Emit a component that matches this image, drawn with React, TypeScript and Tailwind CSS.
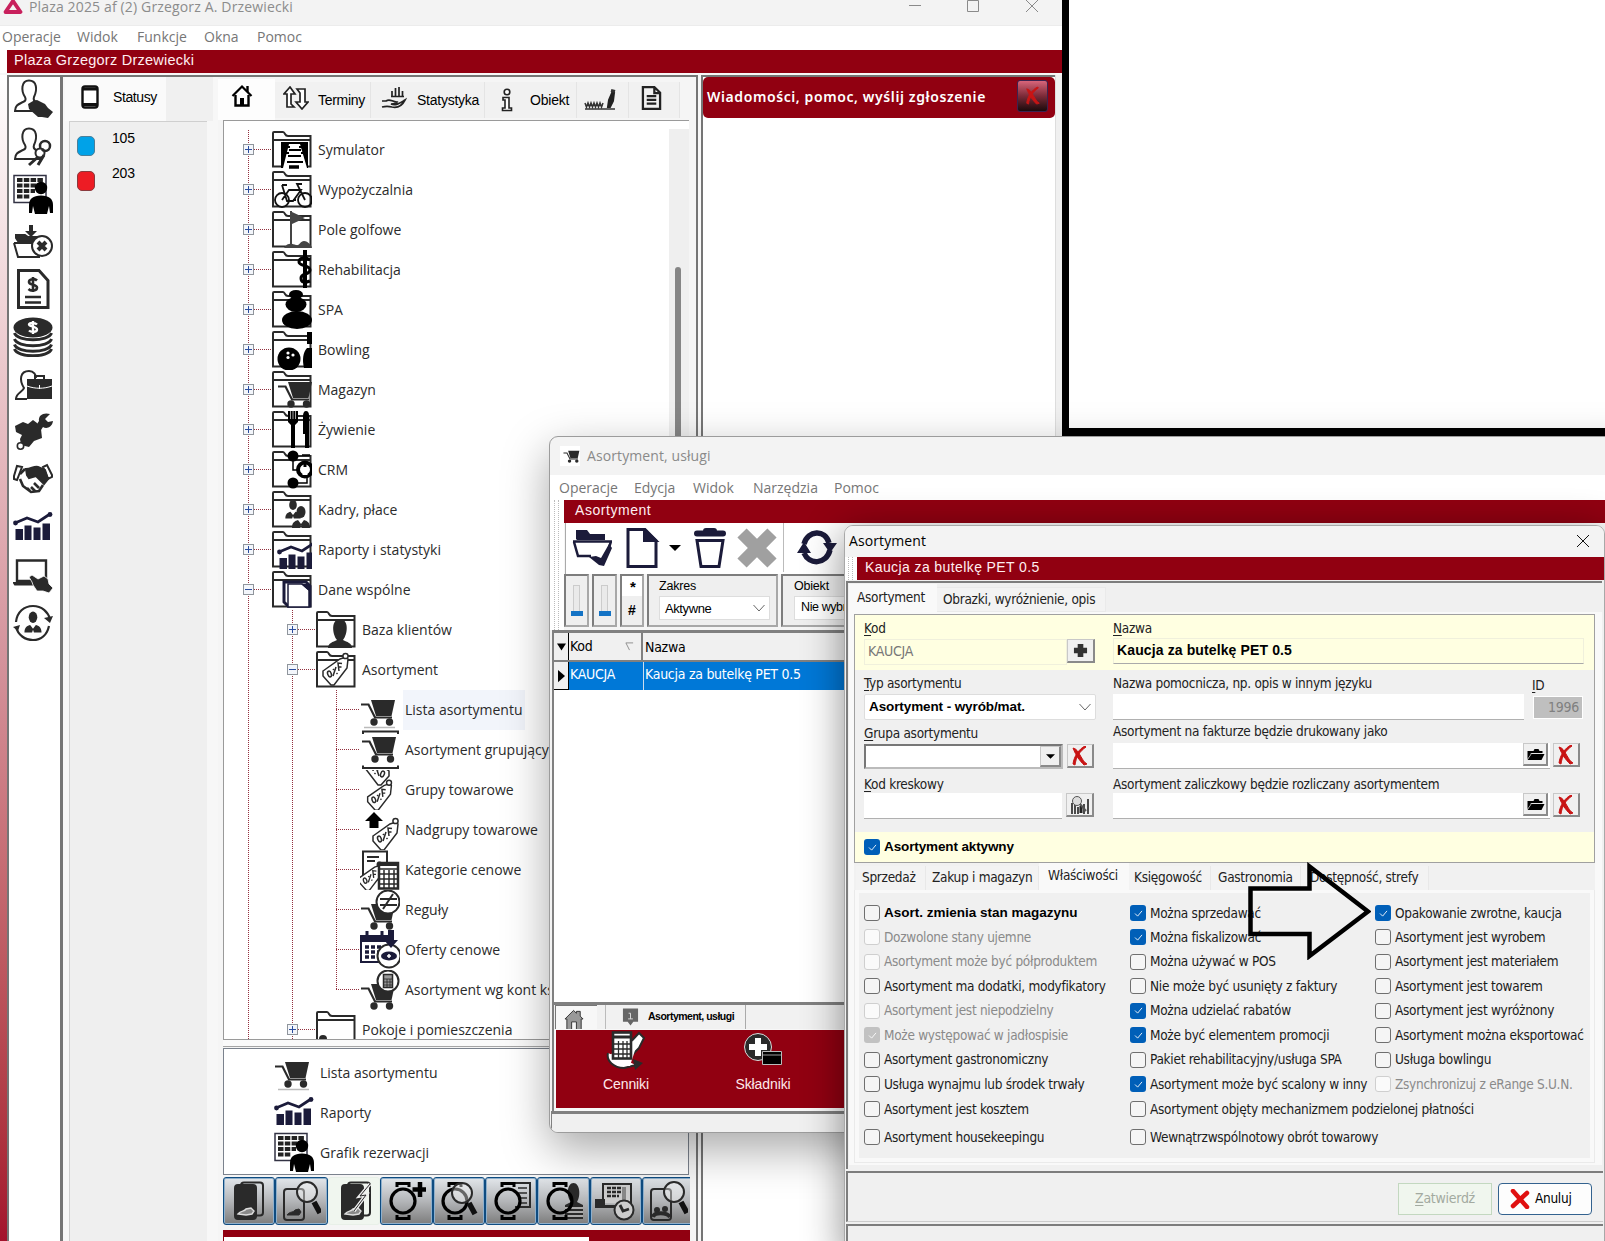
import React from "react";

const segoe = "font-['Open_Sans','Noto_Sans',sans-serif] text-[14px] whitespace-nowrap";
const tahoma = "font-['DejaVu_Sans_Condensed','DejaVu_Sans',sans-serif] text-[13.500px] tracking-[-0.280px] whitespace-nowrap";
const sans = "font-['Liberation_Sans',sans-serif] whitespace-nowrap";

const DARK = "#2a2a2a";
const NAVY = "#1b1b3a";

type P = { children?: React.ReactNode; className?: string };

function Ico({ children, className = "w-10 h-10" }: P) {
  return (
    <svg viewBox="0 0 40 40" className={"shrink-0 overflow-hidden " + className} fill="none" stroke={DARK} strokeWidth="2">
      {children}
    </svg>
  );
}

/* ---------- icon parts, all drawn on a 40x40 grid ---------- */

const Folder = () => (
  <>
    <path d="M1 36.500V3q0-1 1-1h9q1 0 2 2t3 2h22.500v30.500z" fill="#fff" />
    <path d="M1 10H38.500" />
  </>
);

const CartPart = ({ shadow }: { shadow?: boolean }) => (
  <>
    <path d="M1 14.500h7.500l6.500 13h17" strokeWidth="2.200" />
    <path d="M11 10h24l-3.500 16H16z" fill={DARK} stroke="none" />
    <circle cx="14" cy="32" r="3.700" fill={DARK} stroke="none" />
    <circle cx="29.500" cy="32" r="3.700" fill={DARK} stroke="none" />
    {shadow && <path d="M4 37.500h31" stroke="#bbb" strokeWidth="1.500" />}
  </>
);

const Bars = () => (
  <g stroke={NAVY} fill={NAVY}>
    <path d="M2 11 14 6l11 4L37 2" fill="none" strokeWidth="2.800" />
    <circle cx="2.500" cy="11" r="2.400" stroke="none" />
    <circle cx="37" cy="2.500" r="2.400" stroke="none" />
    <path d="M2.500 17H10v11H2.500zM11.500 13.500h7V28h-7zM20.500 15.500h7V28h-7zM29.500 11.500H37V28h-7.500z" stroke="none" />
  </g>
);

const Tag = () => (
  <g strokeWidth="1.500">
    <path d="M7 21 24 9l6-2 2 2-1 9-13 17h-3l-8-9z" fill="#fff" />
    <circle cx="29.500" cy="6" r="2.600" fill="#fff" />
    <ellipse cx="13.500" cy="24" rx="1.800" ry="3" transform="rotate(-20 13.500 24)" />
    <path d="m17 26 3-9M17 19l.8 1M20.500 23l1 1M23 21l-1-8 4 .5M22.500 17h3" />
  </g>
);

const Reservation = () => (
  <>
    <path d="M1 1.500h32v27H1z" fill="#fff" strokeWidth="1.500" stroke="#334" />
    <path d="M4 6h26M4 11.500h26M4 17h18M4 22.500h13" strokeWidth="3.800" stroke="#222" strokeDasharray="5.500 1.300" />
    <circle cx="28" cy="14" r="6.200" fill="#000" stroke="none" />
    <path d="M16 39V31c0-6 4-9.500 12-9.500S40 25 40 31v8h-3l-1-7-2 8H22l-2-8-1 7z" fill="#000" stroke="none" />
  </>
);

const PersonOutline = () => (
  <path d="M28 32H2c0-6 4-7 8-9 3-1 3-3 2-5-4-6-4-16.500 4-16.500 8 0 8.500 9 5 16.500-1 3 0 4 2 5l6 3" />
);

const Watch = () => (
  <>
    <circle cx="17" cy="20" r="12" stroke="#000" strokeWidth="3.200" />
    <path d="M11 6V2.500h12V6M11 34v3.500h12V34" stroke="#000" strokeWidth="3" />
  </>
);

const Lens = () => (
  <>
    <circle cx="24" cy="12" r="10" fill="#ffffff66" />
    <path d="m31 22 6 11" stroke="#111" strokeWidth="5.500" />
  </>
);

const Suit = () => (
  <g fill={DARK} stroke="none">
    <ellipse cx="20" cy="14" rx="4.500" ry="6" />
    <path d="M11 30c0-6 3-7 6-8l3 4 3-4c3 1 6 2 6 8h-8l-1-3-1 3z" />
  </g>
);

/* ---------- tree ---------- */

const roots: [string, React.ReactNode][] = [
  ["Symulator", <g key="a" stroke="none"><path d="M9 12h27v26H9z" fill="#000" /><path d="M17 14h11l7 24H11z" fill="#fff" /><path d="M15 17h3M27 17h3M13 23h4M29 23h4M17 20h12M16 26h13M15 32h16" stroke="#000" strokeWidth="2.200" /><path d="M17 37h10" stroke="#000" strokeWidth="3.500" /></g>],
  ["Wypożyczalnia", <g key="b" stroke="#111" strokeWidth="1.800"><circle cx="10" cy="30" r="7" fill="#fff" /><circle cx="33" cy="30" r="7" /><path d="m10 30 7-10h12l-8 11h-6l-5-16M33 30 25 14h5M10 15h5M21 30h3" /></g>],
  ["Pole golfowe", <g key="c" stroke="none" fill="#444"><path d="M18 1h2v36h-2zM20 2l13 6-13 6z" /><path d="M12 38c4-6 8-4 12-3s4-4 8-4 8 5 8 7z" /></g>],
  ["Rehabilitacja", <g key="d" stroke="#000" strokeWidth="3"><path d="M33 0v38" strokeWidth="4" /><path d="M38 10c-5-4-11-2-11 2s11 3 11 8-9 3-9 8 4 5 9 3" /></g>],
  ["SPA", <g key="e" stroke="none" fill="#000"><ellipse cx="24" cy="4.500" rx="7" ry="4.500" /><ellipse cx="24" cy="14.500" rx="10.500" ry="7.500" /><ellipse cx="25" cy="30" rx="15" ry="9" /></g>],
  ["Bowling", <g key="f" stroke="none" fill="#000"><circle cx="17" cy="29" r="11.500" /><circle cx="16" cy="23" r="1.600" fill="#fff" /><circle cx="21" cy="25" r="1.600" fill="#fff" /><circle cx="16" cy="27.500" r="1.600" fill="#fff" /><path d="M35 2h5v12h-5zM32 38c-2-8-1-16 3-20h5v20z" /></g>],
  ["Magazyn", <g key="g" transform="translate(5 2)"><CartPart /></g>],
  ["Żywienie", <g key="h" stroke="none" fill="#000"><path d="M16 1h10v11l-3 3v23h-4V15l-3-3z" /><path d="M18.500 1v8M21 1v8M23.500 1v8" stroke="#ccc" strokeWidth=".8" /><path d="M31 24V6c0-3 1-5 3-5s3 2 3 4v33h-4V24z" /></g>],
  ["CRM", <g key="i" stroke="#000"><circle cx="21" cy="6" r="4.500" fill="#000" /><circle cx="21" cy="33" r="4.500" fill="#000" /><path d="M21 8v12h6M25 33h10v-6M30 5h8" strokeWidth="1.500" /><circle cx="33" cy="19.500" r="7" fill="#fff" strokeWidth="4" /><path d="M33 14v4" strokeWidth="3" /><path d="M33 17v8" strokeWidth="5" stroke="#fff" /></g>],
  ["Kadry, płace", <g key="j"><g transform="translate(4 3) scale(.85)"><Suit /></g><g transform="translate(9 8)"><Suit /></g></g>],
  ["Raporty i statystyki", <g key="k" transform="translate(5 11)"><Bars /></g>],
  ["Dane wspólne", <g key="l" stroke={NAVY} strokeWidth="3"><path d="M12 12h22l4 4v20H16l-4-4z" fill="#fff" /><path d="M16 14h14l7 6v17H16z" fill="#fff" strokeWidth="1.500" /><path d="M29 14l8 7v-7z" fill={NAVY} stroke="none" /></g>],
];

const leaves: [string, React.ReactNode][] = [
  ["Lista asortymentu", <CartPart key="a" shadow />],
  ["Asortyment grupujący", <g key="b"><path d="M3 4V1.500h35V4M3 35.500V38h35v-2.500" /><g transform="translate(1 -3)"><CartPart /></g></g>],
  ["Grupy towarowe", <g key="c"><g transform="translate(36 -20) scale(-1 1)"><Tag /></g><g transform="translate(1 7) scale(.95)"><Tag /></g></g>],
  ["Nadgrupy towarowe", <g key="d"><path d="M14 2l9 9h-4.500v7h-9v-7H5z" fill="#000" stroke="none" /><g transform="translate(6 5)"><Tag /></g></g>],
  ["Kategorie cenowe", <g key="e"><path d="M3 1.500h24v28H3zM7 7h12M7 11h8" fill="#fff" /><g transform="translate(-7 9) scale(.9)"><Tag /></g><path d="M19 13h19v25.500H19z" fill="#fff" strokeWidth="2.500" /><path d="M19 14h19" strokeWidth="4" /><path d="M19 19h19M19 24h19M19 29h19M19 34h19M24 20v19M29 20v19M34 20v19" strokeWidth="1.500" /></g>],
  ["Reguły", <g key="f"><g transform="translate(0 4)"><CartPart /></g><circle cx="28" cy="12" r="11.500" fill="#fff" /><path d="M20 9h17M20 15h17M23 19 33 4" /></g>],
  ["Oferty cenowe", <g key="g" stroke={NAVY}><path d="M1 6h28v26H1z" fill="#fff" /><path d="M0 8.500h30" strokeWidth="7" /><path d="M7 1v6M22 1v6" strokeWidth="3" /><path d="M5 17h18M5 22h18M5 27h18" strokeWidth="3.500" strokeDasharray="4 2" /><circle cx="29" cy="26" r="11.500" fill="#fff" stroke={DARK} /><path d="M28 0h6v10h4l-7 8-7-8h4z" fill={NAVY} stroke="none" /><ellipse cx="29" cy="26" rx="7" ry="3.500" fill={NAVY} /><path d="M29 24v4M27 26h4" stroke="#fff" strokeWidth="1.500" /></g>],
  ["Asortyment wg kont księgowych", <g key="h"><g transform="translate(0 4)"><CartPart /></g><circle cx="28" cy="11" r="10.500" fill="#fff" /><path d="M23.500 4.500h9v13h-9z" fill="#999" strokeWidth="1.500" /><path d="M24 9h8M24 12h8M24 15h8M27 9v9M30 9v9" strokeWidth=".8" /></g>],
];

const dotsV = "w-px shrink-0 bg-[repeating-linear-gradient(to_bottom,#93303f_0px,#93303f_1px,transparent_1px,transparent_2px)]";
const dotsH = "h-px bg-[repeating-linear-gradient(to_right,#93303f_0px,#93303f_1px,transparent_1px,transparent_2px)]";

function Box({ open }: { open?: boolean }) {
  return (
    <span className="absolute left-[-5px] top-[14px] w-[11px] h-[11px] border border-[#8f959c] bg-[#f3f6fb]">
      <span className="absolute left-px right-px top-1 h-px bg-[#2a4d9e]" />
      {!open && <span className="absolute top-px bottom-px left-1 w-px bg-[#2a4d9e]" />}
    </span>
  );
}

function Node({ level, icon, label, box, open, last, active }: {
  level: number; icon: React.ReactNode; label: string; box?: boolean; open?: boolean; last?: boolean; active?: boolean;
}) {
  return (
    <div className="flex h-10 shrink-0 items-center">
      <div className="w-6 shrink-0" />
      {level > 0 && <div className="w-11 h-10 shrink-0 flex"><div className={dotsV} /></div>}
      {level > 1 && <div className={"w-11 h-10 shrink-0 flex"}>{<div className={last ? "w-px" : "w-px"} />}</div>}
      <div className="relative h-10 w-6 shrink-0">
        <div className={dotsV + (last ? " h-5" : " h-10")} />
        <div className={"absolute left-0 top-[19px] w-6 " + dotsH} />
        {box && <Box open={open} />}
      </div>
      <Ico>
        {level < 2 && <Folder />}
        {icon}
      </Ico>
      <div className={segoe + " text-[#2b2b2b] h-10 leading-[40px] " + (level === 2 ? "ml-[3px] px-[2px] " : "ml-[6px] ") + (active ? "bg-[#f2f5fb]" : "")}>{label}</div>
    </div>
  );
}

/* ---------- main window ---------- */

const side: React.ReactNode[] = [
  <g key="1"><PersonOutline /><path d="m15 25 5-3 4-1 8 4 3 4 5 4-5 6-6-1h-4l-9-8z" fill={DARK} stroke="none" /></g>,
  <g key="2"><PersonOutline /><circle cx="32" cy="19" r="5" strokeWidth="2.500" /><circle cx="27" cy="26" r="4.500" fill="#fff" /><path d="m25 30-9 8M29 24l2-2M31 28l-6 10" strokeWidth="3" /></g>,
  <g key="3"><Reservation /></g>,
  <g key="4"><path d="M16 3h4v6h4l-6 6-6-6h4z" fill={DARK} stroke="none" /><path d="M3 16V13h9l3 2h9v4H5z" fill={DARK} /><path d="M1 21l4 14h22M1 21h19" /><circle cx="29" cy="24" r="10" fill="#fff" /><path d="m25 20 8 8M33 20l-8 8" strokeWidth="4" /></g>,
  <g key="5"><path d="M5.500 1.500H26l9 10v27H5.500z" strokeWidth="3" /><path d="M12 28h16M12 33.500h16" strokeWidth="2.400" /><path d="M24 11.500c-2-2-8-2-8 1.500s8 2 8 5.500-6 4-8.500 1.500M20 8v15" strokeWidth="2.600" /></g>,
  <g key="6"><ellipse cx="20" cy="10.500" rx="19.500" ry="10" fill={DARK} stroke="none" /><path d="M24 7.500c-2-2-8-2-8 0s8 2 8 5-6 3-8 1M20 4v13" stroke="#fff" strokeWidth="2.400" /><path d="M1.500 16c3 9 34 9 37 0M1.500 22c3 9 34 9 37 0M1.500 27.500c3 9 34 9 37 0M1.500 32c3 9 34 9 37 0" strokeWidth="3" /></g>,
  <g key="7"><path d="M3 34c0-6 7-7 8-11-5-8-4-17 5-17 5 0 7 4 7 7M2 34h12" /><path d="M14 14h25v20H14z" fill={DARK} stroke="none" /><path d="M22 14v-3h9v3" /><path d="M14 21c8 3 17 3 25 0M26.500 20v4" stroke="#fff" strokeWidth="1" /></g>,
  <g key="8" fill={DARK} stroke="none"><path d="M2 14l8-4 5 2 5-4 4 3 4 6 1 9-8 3-5 6-8-2-1-6 2-4-6-3z" /><path d="m22 15 4-6c-1-6 5-9 11-7l-5 5 3 3 5-1c-1 7-7 8-10 6l-4 6z" /><circle cx="7.500" cy="34" r="3.200" fill="#fff" stroke={DARK} strokeWidth="1.600" /></g>,
  <g key="9"><path d="m1 16 3-10 5 1-5 13-3-1zM39 15 34 5l-4 2 5 12 4-2z" fill="#fff" /><path d="M13 9c5 0 8-3 12-2l7 3 3 9-4 5-8-8-7 2-2-3z" fill={DARK} /><path d="M7 19l3 7 8 6 8-1 4-6M17 31l-3-3M22 31l-4-4M26 28l-5-5M7 14l5-5" strokeWidth="2.600" /></g>,
  <g key="10" transform="translate(0 5)"><Bars /></g>,
  <g key="11"><path d="M4 5.500h29V26H4z" strokeWidth="2.400" /><path d="M1 28h22v1.500H2z" fill={DARK} /><path d="m16 22 3-2 6 4 6-3 4 3 1 5 4 4-4 5-6-2-6 0-4-6-1-3z" fill={DARK} stroke="#fff" strokeWidth=".8" /></g>,
  <g key="12"><path d="M3 19C4 9 11 3 20 3s15 6 17 13M36 23c-2 9-8 14-16 14S5 32 3 24" strokeWidth="2.200" /><path d="m31 15 9-2-3 7zM0 24l7-2-2 6z" fill={DARK} stroke="none" /><g transform="translate(1 1) scale(.95)"><Suit /></g></g>,
];

const Docs = () => (
  <>
    <rect x="12" y="1.500" width="22" height="33" rx="3" />
    <rect x="6" y="4" width="21" height="34" rx="3" fill={DARK} />
    <path d="M9 33c3-4 6-2 8-5l5-1 3 3-2 3-6 1z" stroke="#ddd" strokeWidth="1.400" fill="#888" />
  </>
);

const dock: React.ReactNode[] = [
  <Docs key="1" />,
  <g key="2"><rect x="3" y="8" width="20" height="31" rx="3" /><path d="M6 34c3-4 6-2 8-5l4-1 2 3-2 3z" fill={DARK} strokeWidth="1" /><g transform="translate(2 -1)"><Lens /></g></g>,
  <g key="3"><Docs /><path d="m34 3-10 12 6-1-12 16" stroke="#eee" strokeWidth="3.500" /><path d="m34 3-10 12 6-1-12 16" strokeWidth="1" /></g>,
  <g key="4"><Watch /><path d="M34 1v15M26.500 8.500h15" stroke="#000" strokeWidth="4.500" /></g>,
  <g key="5"><Watch /><Lens /></g>,
  <g key="6"><path d="M18 2h21v24H24" /><path d="M27 7h9M27 12h9M29 17h7M30 22h6" strokeWidth="1.500" /><Watch /></g>,
  <g key="7"><path d="M22 38V24l6-3c-5-6-4-19 2.500-19S38 15 34 21l6 3v14z" fill={DARK} stroke="none" /><path d="M22 27h18M22 31h18M22 35h18" stroke="#aaa" /><Watch /></g>,
  <g key="8"><path d="M8 22V3h28v20" fill="#ccc" /><path d="M0 18h10v6h12v3H0z" fill={DARK} stroke="none" /><path d="M12 7h14M12 11h14M12 15h12" strokeDasharray="4 1" strokeWidth="2.500" /><path d="M29 6v14" stroke="#888" strokeWidth="4" /><circle cx="29" cy="29" r="9.500" fill="#ccc" /><path d="m25 24 3 6 6-2" strokeWidth="2.800" /></g>,
  <g key="9"><rect x="3" y="8" width="20" height="31" rx="3" /><circle cx="9" cy="29" r="3" fill={DARK} stroke="none" /><circle cx="17" cy="28" r="3" fill={DARK} stroke="none" /><path d="M5 36c1-5 14-5 17 0" strokeWidth="4" /><g transform="translate(2 -1)"><Lens /></g></g>,
];

const RedCross = ({ className = "w-5 h-5" }: { className?: string }) => (
  <svg viewBox="0 0 20 20" className={className}>
    <path d="M3 2c4 1 5 4 7 7 3 5 4 7 7 9l-3 1C10 15 6 10 3 2zM16 1C10 5 6 11 5 19l-2-1C4 10 9 3 15 0z" fill="#c81414" stroke="#c81414" />
  </svg>
);

function MenuBar({ items, className }: { items: [string, string][]; className: string }) {
  return (
    <div className={segoe + " flex items-center bg-white text-[#767676] " + className}>
      {items.map(([t, w]) => <span key={t} className={"shrink-0 " + w}>{t}</span>)}
    </div>
  );
}

function MainWindow() {
  return (
    <div className="absolute left-0 top-0 w-[1062px] h-[1241px] bg-[#f7f7f7] flex flex-col overflow-hidden">
      <div className="h-[26px] bg-[#f3f3f3] flex items-start shrink-0 border-b border-[#ececec]">
        <svg viewBox="0 0 20 16" className="w-5 h-4 ml-[3px] -mt-[1px]"><path d="M10 2 17.500 13H2.500z" fill="none" stroke="#c8205c" strokeWidth="3.800" strokeLinejoin="round" /></svg>
        <div className={segoe + " ml-[6px] h-4 leading-[13px] text-[#8c8c8c] w-[880px] tracking-[0.150px]"}>Plaza 2025 af (2) Grzegorz A. Drzewiecki</div>
        <svg viewBox="0 0 132 14" className="w-[132px] h-[14px]" fill="none" stroke="#8a8a8a"><path d="M0 5.500h12M58.500 .5h11v11h-11zM117 0l12 12M129 0l-12 12" /></svg>
      </div>
      <MenuBar className="h-6 shrink-0 pl-[2px] pb-[3px]" items={[["Operacje", "w-[75px]"], ["Widok", "w-[60px]"], ["Funkcje", "w-[67px]"], ["Okna", "w-[53px]"], ["Pomoc", ""]]} />
      <div className="h-[23px] shrink-0 pl-[7px] bg-white">
        <div className={sans + " h-[23px] bg-[#910011] text-[#ffeef0] text-[14.500px] leading-[21px] pl-[7px] tracking-[0.250px]"}>Plaza Grzegorz Drzewiecki</div>
      </div>
      <div className="flex flex-1 min-h-0 pt-[2px]">
        <div className="w-[7px] shrink-0 bg-gradient-to-b from-white via-[#d4939c] to-[#a3122c]" />
        <div className="w-[53px] shrink-0 border-l-2 border-t-2 border-[#757575] bg-white pl-1">
          <div className="w-10">
            {side.map((s, i) => (
              <div key={i} className="h-[47.600px] pt-[2px]"><Ico className="w-10 h-10">{s}</Ico></div>
            ))}
          </div>
        </div>
        <div className="w-[158px] shrink-0 border-l-[3px] border-t-2 border-[#757575] bg-[#f7f7f7] flex flex-col">
          <div className="h-11 flex ml-[2px] w-[148px] bg-[#f0f0f0] shrink-0">
            <div className="w-[101px] bg-[#fafafa] flex items-center pb-1">
              <svg viewBox="0 0 18 24" className="w-[18px] h-6 ml-4"><rect x="1.500" y="1.500" width="15" height="21" rx="2.500" fill="#fff" stroke="#111" strokeWidth="2.400" /><path d="M2 4h14M2 19.500h14" stroke="#111" strokeWidth="3" /></svg>
              <span className={sans + " text-[14px] ml-[14px] tracking-[-0.400px]"}>Statusy</span>
            </div>
          </div>
          <div className="flex-1 bg-[#efefef] border-l border-t border-[#cfcfcf] w-[138px] ml-[6px]">
            <div className="flex pt-[14px] pl-[7px] h-[49px]">
              <div className="w-[18px] h-5 rounded-[5px] bg-[#00a2e8] border border-[#4b7f99]" />
              <span className={sans + " text-[14px] leading-4 -mt-[6px] ml-[17px] tracking-[-0.2px]"}>105</span>
            </div>
            <div className="flex pl-[7px]">
              <div className="w-[18px] h-5 rounded-[5px] bg-[#ed1c24] border border-[#8a3a3e]" />
              <span className={sans + " text-[14px] leading-4 -mt-[6px] ml-[17px] tracking-[-0.2px]"}>203</span>
            </div>
          </div>
        </div>
        <div className="w-[480px] shrink-0 border-t-2 border-[#757575] flex flex-col pr-[1px] border-r-2 bg-[#f5f5f5]">
          <div className="flex h-[43px] shrink-0 items-start pt-[2px]">
            <div className="w-[57px] h-[41px] bg-[#fdfdfd]">
              <svg viewBox="0 0 24 24" className="w-[24px] h-6 ml-[13px] mt-[5px]"><path d="m1.500 12 9.500-9.500L20.500 12" fill="none" stroke="#000" strokeWidth="2.200" /><path d="M4.500 11v10.500h13V11M16.500 8V2" fill="none" stroke="#000" strokeWidth="2.400" /><path d="M9 14h4v8H9z" /></svg>
            </div>
            <div className="h-9 mt-[3px] w-24 flex items-center border-r border-[#e4e4e4] bg-[#f1f1f1]">
              <svg viewBox="0 0 26 24" className="w-[26px] h-6 ml-[8px] -mt-1" fill="#fff" stroke="#222" strokeWidth="1.700"><path d="M7 1 1 8h3v13h7l-3-3V8h4z" /><path d="M19 23l6-7h-3V3h-8l3 4v9h-4z" /></svg>
              <span className={sans + " text-[14px] ml-[9px] tracking-[-0.300px]"}>Terminy</span>
            </div>
            <div className="h-9 mt-[3px] w-[114px] flex items-center border-r border-[#e4e4e4] bg-[#f1f1f1]">
              <svg viewBox="0 0 26 24" className="w-[26px] h-6 ml-[10px] -mt-1" fill="none" stroke="#222" strokeWidth="1.700"><path d="M11 10V5M14.500 10V2M18 10V1M21.500 10V5M10 10.500h13" /><path d="M1 15h4c4-3 6 1 11 1-1 2-3 2-6 2 5 2 9-1 14-4-3 6-8 8-13 7-4-1-6-1-10 0" /></svg>
              <span className={sans + " text-[14px] ml-[10px] tracking-[-0.250px]"}>Statystyka</span>
            </div>
            <div className="h-9 mt-[3px] w-[92px] flex items-center border-r border-[#e4e4e4] bg-[#f1f1f1]">
              <svg viewBox="0 0 12 24" className="w-3 h-6 ml-[16px]" fill="#fff" stroke="#222" strokeWidth="1.600"><circle cx="6" cy="4" r="2.800" /><path d="M2 9.500h6V20h2.500v2.500h-9V20H4v-8H2z" /></svg>
              <span className={sans + " text-[14px] ml-[17px] tracking-[-0.200px]"}>Obiekt</span>
            </div>
            <div className="h-9 mt-[3px] w-[52px] flex items-center border-r border-[#e4e4e4] bg-[#f1f1f1]">
              <svg viewBox="0 0 32 24" className="w-8 h-6 ml-[7px]" fill="none" stroke="#333"><path d="M1 15l1.500 4 1.500-4 1.500 4 1.500-4 1.500 4 1.500-4 1.500 4 1.500-4 1.500 4 1.500-4 1.500 4 1.500-4" strokeWidth="1.500" /><path d="M1 21h30" strokeWidth="1.500" /><path d="m24 19 1-7 3-7h2l-1 8-3 6z" fill="#222" stroke="#222" strokeWidth="2" /><path d="M27 2.500l4 1" strokeWidth="3" /></svg>
            </div>
            <div className="h-9 mt-[3px] w-[51px] flex items-center border-r border-[#e4e4e4] bg-[#f1f1f1]">
              <svg viewBox="0 0 22 26" className="w-[21px] h-[26px] ml-3 -mt-1" fill="none" stroke="#222" strokeWidth="2.400"><path d="M2 1.500h12l6 6v17H2zM14 2v6h6M6 11h10M6 15h10M6 19h10" /></svg>
            </div>
          </div>
          <div className="ml-[5px] w-[466px] h-[920px] shrink-0 border-t border-b border-l border-[#9a9a9a] bg-white flex overflow-hidden">
            <div className="flex-1 pt-[9px] overflow-hidden flex flex-col relative">
              {roots.map(([label, icon]) => (
                <Node key={label} level={0} label={label} icon={icon} box open={label === "Dane wspólne"} />
              ))}
              <Node level={1} label="Baza klientów" box icon={<path d="M12 38c0-5 5-6 9-8-5-6-6-21 3-21s8 15 3 21c4 2 9 3 9 8z" fill={DARK} stroke="none" />} />
              <Node level={1} label="Asortyment" box open icon={<Tag />} />
              <div className="flex flex-col shrink-0 relative">
                {leaves.map(([label, icon], i) => (
                  <Node key={label} level={2} label={label} icon={icon} last={i === leaves.length - 1} active={i === 0} />
                ))}
                {/* the parent branch carries on beside the leaves */}
                <div className={"absolute left-[68px] top-0 bottom-0 " + dotsV} />
              </div>
              <Node level={1} label="Pokoje i pomieszczenia" box icon={<circle cx="7" cy="29" r="4" fill={DARK} stroke="none" />} />
            </div>
            <div className="w-5 bg-[#efefef] mt-2">
              <div className="mt-[138px] ml-[6px] w-[6px] h-[600px] rounded bg-[#858585]" />
            </div>
          </div>
          <div className="ml-[5px] w-[466px] h-[7px] shrink-0 border-b border-[#a5a5a5] bg-[#fafafa]" />
          <div className="ml-[5px] mt-[1px] w-[466px] h-[127px] shrink-0 border border-[#7b828d] bg-white flex flex-col pt-[3px]">
            {([["Lista asortymentu", <CartPart key="1" shadow />], ["Raporty", <g key="2" transform="translate(0 5)"><Bars /></g>], ["Grafik rezerwacji", <Reservation key="3" />]] as [string, React.ReactNode][]).map(([t, ic]) => (
              <div key={t} className="h-10 flex items-center pl-[50px]">
                <Ico>{ic}</Ico>
                <span className={segoe + " ml-[6px] text-[#2b2b2b]"}>{t}</span>
              </div>
            ))}
          </div>
          <div className="ml-[5px] mt-[2px] w-[467px] flex shrink-0 overflow-hidden">
            {dock.map((d, i) => (
              <div key={i} className={"w-[52.400px] h-12 shrink-0 flex items-center justify-center border rounded-[3px] " + (i === 2 ? "bg-[#f0f6ef] border-[#e8f0e8]" : "bg-gradient-to-b from-[#e2e6ea] via-[#b4b6b9] to-[#7d7d7d] border-[#0f4c81] shadow-[inset_0_0_0_1px_#8fb0cc]")}>
                <Ico className={i === 2 ? "w-10 h-10 ml-1" : "w-10 h-10 -ml-[1px]"}>{d}</Ico>
              </div>
            ))}
          </div>
          <div className="ml-[5px] mt-[5px] w-[467px] flex-1 bg-[#910011] pt-[7px] pl-[1px]">
            <div className="w-[365px] h-[10px] bg-white" />
          </div>
        </div>
        <div className="w-[354px] ml-[3px] shrink-0 border-l-2 border-t-2 border-[#757575] bg-white">
          <div className="h-[41px] flex items-center bg-[#910011] rounded-[5px] pl-[4px] pb-[3px] text-white">
            <span className={"font-['Noto_Sans',sans-serif] font-semibold text-[14px] whitespace-nowrap w-[310px] tracking-[0.600px]"}>Wiadomości, pomoc, wyślij zgłoszenie</span>
            <div className="w-[31px] h-8 rounded-[3px] border border-[#3b2350] bg-gradient-to-b from-[#d8657a] via-[#7c2a38] to-[#1c0a0c] flex items-center justify-center">
              <RedCross className="w-[18px] h-6" />
            </div>
          </div>
        </div>
        <div className="flex-1 bg-[#f0f0f0] border-l border-[#ddd]" />
      </div>
    </div>
  );
}

/* ---------- "Asortyment, usługi" ---------- */

const Grip = () => <div className="w-[5px] border-x border-dotted border-[#bbb]" />;

const sunk = "border-2 border-[#7d7d7d] border-r-[#a8a8a8] border-b-[#a8a8a8] bg-[#efefef]";

function ListWindow() {
  return (
    <div className="absolute left-[549px] top-[436px] w-[1100px] h-[697px] rounded-[9px] border border-[#9c9c9c] bg-[#f3f3f3] shadow-[0_16px_46px_rgba(0,0,0,0.35)] flex flex-col overflow-hidden">
      <div className="h-[38px] shrink-0 flex items-center pl-[10px] pb-[1px]">
        <div className="w-5 h-5 bg-white flex items-center justify-end"><Ico className="w-[17px] h-[17px]"><g transform="translate(0 -2) scale(1.100)"><CartPart /></g></Ico></div>
        <span className={segoe + " ml-[7px] text-[#8a8a8a] tracking-[0.100px]"}>Asortyment, usługi</span>
      </div>
      <MenuBar className="h-[25px] shrink-0 pl-[9px] pb-[1px]" items={[["Operacje", "w-[75px]"], ["Edycja", "w-[59px]"], ["Widok", "w-[60px]"], ["Narzędzia", "w-[81px]"], ["Pomoc", ""]]} />
      <div className="flex h-[130px] shrink-0 bg-[#f5f5f5]">
        <div className="w-[14px] bg-white pl-1 flex"><Grip /></div>
        <div className="flex-1 flex flex-col">
          <div className={sans + " h-[23px] bg-[#910011] text-[#ffeef0] text-[14px] leading-[21px] pl-[11px] tracking-[0.550px]"}>Asortyment</div>
          <div className="h-[51px] bg-white flex items-center border-l border-[#aaa] ml-[1px] pl-[6px] pb-[2px]">
            <Ico className="w-10 h-10"><path d="M4 11V2h11l3 4h15v6H5z" fill={NAVY} stroke="none" /><path d="m2 14 4 14h13M1 13.500h38l-3 9" stroke={NAVY} strokeWidth="2.500" /><path d="m17 29 7-1 5 2 8-14 3 4-8 18-5-1z" fill={NAVY} stroke="none" /></Ico>
            <Ico className="w-10 h-10 ml-[10px]"><path d="M6 1.500h17l11 11v26H6z" stroke={NAVY} strokeWidth="3" /><path d="M22 1l13 12H22z" fill={NAVY} stroke={NAVY} /></Ico>
            <svg viewBox="0 0 12 6" className="w-3 h-[6px] ml-[7px]"><path d="M0 0h12L6 6z" /></svg>
            <Ico className="w-10 h-10 ml-[9px]"><path d="M7 5.500h26M16 3h8" stroke={NAVY} strokeWidth="6" strokeLinecap="round" /><path d="M7 12.500h26l-4 26H11z" stroke={NAVY} strokeWidth="3" /></Ico>
            <Ico className="w-[42px] h-10 ml-[6px]"><path d="m5 5 30 30M35 5 5 35" stroke="#a0a0a0" strokeWidth="13" /></Ico>
            <div className="w-px h-[49px] bg-[#bbb] ml-[5px]" />
            <Ico className="w-10 h-10 ml-[13px]"><path d="M7 16C11 2 28 1 32 15M33 22c-4 15-21 15-26 3" stroke={NAVY} strokeWidth="5.500" /><path d="M26 15h14l-7 10zM0 25 7 14l7 11z" fill={NAVY} stroke="none" /></Ico>
          </div>
          <div className="h-[53px] flex gap-[3px]">
            {[0, 1].map((i) => (
              <div key={i} className={sunk + " w-[25px] flex flex-col items-center pt-[9px]"}>
                <div className="w-[7px] h-[28px] border border-[#ccc] bg-[#eaeaea]" />
                <div className="w-3 h-[5px] -mt-[2px] bg-[#1473c5]" />
              </div>
            ))}
            <div className={sunk + " w-[24px] flex flex-col font-bold text-[15px] items-center " + sans}>
              <div className="h-[20px] w-5 pl-[8px] leading-[22px] bg-white">*</div>
              <div className="text-[14px] leading-[29px]">#</div>
            </div>
            <div className={sunk + " w-[131px] pl-[10px] " + sans}>
              <div className="text-[12.500px] leading-[20px] -tracking-[0.200px]">Zakres</div>
              <div className="w-[111px] h-6 bg-white border border-[#ddd] text-[13px] leading-[23px] pl-[5px] flex justify-between items-center pr-1 -tracking-[0.400px]">
                Aktywne
                <svg viewBox="0 0 12 8" className="w-3 h-2" fill="none" stroke="#666"><path d="m.5 1 5.500 6L11.500 1" /></svg>
              </div>
            </div>
            <div className={sunk + " w-[300px] pl-[11px] " + sans}>
              <div className="text-[12.500px] leading-[20px] -tracking-[0.200px]">Obiekt</div>
              <div className="w-[180px] h-6 bg-white border border-[#ddd] text-[12.500px] leading-[20px] pl-[6px] -tracking-[0.400px]">Nie wybrano</div>
            </div>
          </div>
        </div>
      </div>
      <div className="ml-[2px] h-[372px] shrink-0 bg-white border-l-2 border-t-[3px] border-[#808080] flex flex-col">
        <div className={tahoma + " h-[29px] shrink-0 flex border-b-2 border-[#808080] bg-[#f0f0f0] text-[14px]"}>
          <div className="w-[15px] border-r border-black flex items-center justify-center"><svg viewBox="0 0 10 8" className="w-[9px] h-2"><path d="M0 0h10L5 8z" /></svg></div>
          <div className="w-[74px] border-r-2 border-[#808080] flex items-center justify-between pl-px pr-[7px]">Kod<svg viewBox="0 0 10 10" className="w-[9px] h-[9px]" fill="none" stroke="#888"><path d="M9 1H1l4 8" /></svg></div>
          <div className="pl-[2px] leading-[28px]">Nazwa</div>
        </div>
        <div className={tahoma + " h-7 flex text-white text-[14px]"}>
          <div className="w-[15px] bg-[#f0f0f0] border-r border-b border-black flex items-center justify-center"><svg viewBox="0 0 8 14" className="w-[7px] h-[14px]"><path d="M0 0v14l8-7z" /></svg></div>
          <div className="w-[75px] bg-[#0078d7] pl-px leading-[24px] border-r border-[#cde]">KAUCJA</div>
          <div className="flex-1 bg-[#0078d7] pl-px leading-[24px]">Kaucja za butelkę PET 0.5</div>
        </div>
      </div>
      <div className="ml-[2px] h-[27px] shrink-0 border-l-2 border-t-[3px] border-[#808080] bg-[#f1f1f1] flex pl-[1px]">
        <div className="w-[42px] border-l border-t border-[#777] flex pl-[8px] pt-[2px] bg-[#f7f7f7]">
          <svg viewBox="0 0 22 22" className="w-[21px] h-[22px]" fill="#999" stroke="#333"><path d="M1 11 10 2l3 3V3h4v5l3 3h-2v11h-5v-8H8v8H3V11z" /></svg>
        </div>
        <div className="w-px ml-[8px] bg-[#bbb]" />
        <div className="w-[140px] border-r border-[#aaa] flex items-center pl-4">
          <svg viewBox="0 0 18 20" className="w-[17px] h-5"><path d="M1 1h16v14h-5l-3 4-3-4H1z" fill="#666" /><path d="M7 6h2v6M6.500 12h5" stroke="#ddd" fill="none" /></svg>
          <span className={sans + " ml-[9px] text-[10.500px] font-bold tracking-[-0.500px]"}>Asortyment, usługi</span>
        </div>
      </div>
      <div className="ml-[2px] h-[82px] shrink-0 border-l-2 border-[#808080] pl-[2px] pb-[3px] pt-[1px] bg-[#f7f7f7]">
        <div className={sans + " h-[78px] bg-[#910011] text-[#ffe9ec] text-[14px] flex"}>
          <div className="w-[140px] flex flex-col items-center pt-[1px] tracking-[-0.100px]">
            <Ico className="w-10 h-10"><path d="M2 22c-2 8 6 15 16 15l12-3M20 16 33 2l5 5-5 10-8 8" fill="#fff" stroke={DARK} /><path d="M4 24 12 35h12l6-19-5-8z" fill="#fff" stroke="none" /><rect x="7" y="1.500" width="18" height="26" fill="#fff" strokeWidth="2.600" /><path d="M8 6h16" strokeWidth="3" /><path d="M8 13h16M8 18h16M8 23h16M12.500 10v17M17 10v17M21 10v17" strokeWidth="1.300" /><path d="m27 28 10 4-8 7z" fill={DARK} stroke="none" /></Ico>
            <span className="mt-[3px]">Cenniki</span>
          </div>
          <div className="w-[134px] flex flex-col items-center pt-[1px] tracking-[-0.100px]">
            <Ico className="w-10 h-10"><circle cx="15" cy="16" r="13.500" fill={DARK} stroke="#ddd" strokeWidth="1" /><path d="M15 7v18M6 16h18" stroke="#fff" strokeWidth="6" /><path d="M19.500 20.500h19v13h-19z" fill="#000" stroke="#bbb" strokeWidth="1" /><path d="M20 24h18" stroke="#999" strokeWidth="1" /></Ico>
            <span className="mt-[3px]">Składniki</span>
          </div>
        </div>
      </div>
      <div className="ml-[1px] flex-1 border-t-[3px] border-l border-[#808080] bg-[#f0f0f0]" />
    </div>
  );
}

/* ---------- item dialog ---------- */

function Label({ text, u, className = "" }: { text: string; u?: boolean; className?: string }) {
  return (
    <div className={tahoma + " h-4 leading-4 text-[#222] " + className}>
      {u ? <><span className="underline underline-offset-2">{text[0]}</span>{text.slice(1)}</> : text}
    </div>
  );
}

const btn = "bg-[#f0f0f0] border-t border-l border-[#c8c8c8] border-b-2 border-r-2 border-b-[#8a8a8a] border-r-[#8a8a8a] flex items-center justify-center";
const input = "bg-white border-b border-[#b0b0b0] shrink-0";

const OpenFolder = () => (
  <svg viewBox="0 0 18 14" className="w-[19px] h-[14px]"><path d="M1 12V4h6l1-2h4l1 2h3v2H5z" /><path d="M1 13 5 7h13l-3 6z" /><path d="M4 6.500h12" stroke="#ddd" strokeWidth=".6" /></svg>
);

function Lookup() {
  return (
    <div className="flex">
      <div className={input + " w-[437px] h-[26px] flex justify-end pr-[2px]"}>
        <div className={btn + " w-[25px] h-[23px]"}><OpenFolder /></div>
      </div>
      <div className={btn + " w-[27px] h-6 ml-[3px]"}><RedCross /></div>
    </div>
  );
}

type State = "off" | "on" | "dis" | "dison";

function Check({ state }: { state: State }) {
  const look = {
    off: "border border-[#6f6f6f] bg-[#f5f5f5]",
    on: "bg-[#005fb8]",
    dis: "border border-[#cfcfcf] bg-[#fafafa]",
    dison: "bg-[#c2c2c2]",
  }[state];
  return (
    <span className={"w-4 h-4 rounded-[3px] shrink-0 flex items-center justify-center " + look}>
      {(state === "on" || state === "dison") && (
        <svg viewBox="0 0 10 8" className="w-[9px] h-[7px]" fill="none" stroke="#fff"><path d="m1 4 3 3 5-6" /></svg>
      )}
    </span>
  );
}

const options: [string, State][][] = [
  [["Asort. zmienia stan magazynu", "off"], ["Można sprzedawać", "on"], ["Opakowanie zwrotne, kaucja", "on"]],
  [["Dozwolone stany ujemne", "dis"], ["Można fiskalizować", "on"], ["Asortyment jest wyrobem", "off"]],
  [["Asortyment może być półproduktem", "dis"], ["Można używać w POS", "off"], ["Asortyment jest materiałem", "off"]],
  [["Asortyment ma dodatki, modyfikatory", "off"], ["Nie może być usunięty z faktury", "off"], ["Asortyment jest towarem", "off"]],
  [["Asortyment jest niepodzielny", "dis"], ["Można udzielać rabatów", "on"], ["Asortyment jest wyróżnony", "off"]],
  [["Może występować w jadłospisie", "dison"], ["Może być elementem promocji", "on"], ["Asortyment można eksportować", "off"]],
  [["Asortyment gastronomiczny", "off"], ["Pakiet rehabilitacyjny/usługa SPA", "off"], ["Usługa bowlingu", "off"]],
  [["Usługa wynajmu lub środek trwały", "off"], ["Asortyment może być scalony w inny", "on"], ["Zsynchronizuj z eRange S.U.N.", "dis"]],
  [["Asortyment jest kosztem", "off"], ["Asortyment objęty mechanizmem podzielonej płatności", "off"]],
  [["Asortyment housekeepingu", "off"], ["Wewnątrzwspólnotowy obrót towarowy", "off"]],
];

const subTabs: [string, string][] = [
  ["Sprzedaż", "w-[70px] pl-[6px]"],
  ["Zakup i magazyn", "w-[113px] pl-[6px]"],
  ["Właściwości", "w-[90px] pl-[9px]"],
  ["Księgowość", "w-[82px] pl-[5px]"],
  ["Gastronomia", "w-[90px] pl-[7px]"],
  ["Dostępność, strefy", "w-[128px] pl-[9px]"],
];

function Dialog() {
  return (
    <div className="absolute left-[844px] top-[525px] w-[761px] h-[730px] rounded-t-[9px] border border-[#a8a8a8] bg-[#f0f0f0] shadow-[0_8px_40px_rgba(0,0,0,0.45)] flex flex-col overflow-hidden">
      <div className="h-[31px] shrink-0 bg-[#f3f3f3] flex items-center justify-between pl-1 pr-[14px] pb-[2px]">
        <span className={segoe + " text-black tracking-[0.100px]"}>Asortyment</span>
        <svg viewBox="0 0 14 14" className="w-[14px] h-[14px]" fill="none" stroke="#111"><path d="m1 1 12 12M13 1 1 13" /></svg>
      </div>
      <div className="h-[23px] shrink-0 flex bg-white">
        <div className="w-[12px] pl-[3px] flex"><Grip /></div>
        <div className={sans + " flex-1 bg-[#910011] text-[#ffeef0] text-[14px] leading-[21px] pl-2 tracking-[0.400px]"}>Kaucja za butelkę PET 0.5</div>
      </div>
      <div className="h-[588px] mt-[1px] ml-px mr-[2px] shrink-0 border-t-2 border-l-2 border-[#7d7d7d] pl-[1px] pt-[1px]">
        <div className={tahoma + " flex h-7 items-end text-[#222]"}>
          <div className="h-7 w-[88px] pl-[8px] leading-[27px] bg-[#f9f9f9]">Asortyment</div>
          <div className="h-[25px] w-[169px] pl-[6px] leading-[23px] bg-[#f3f3f3] border border-[#eaeaea] border-l-0">Obrazki, wyróżnienie, opis</div>
        </div>
        <div className="h-[553px] bg-[#f9f9f9] pl-[5px] pr-[7px] pt-[2px]">
          <div className="w-[741px] border border-[#a0a0a0] h-[249px] flex flex-col">
            <div className="h-[55px] shrink-0 bg-[#ffffe1] flex pl-[9px]">
              <div className="w-[249px] pt-[5px]">
                <Label text="Kod" u />
                <div className="flex mt-[3px]">
                  <div className={tahoma + " w-[203px] h-[26px] border border-[#f0f0dc] text-[#777] text-[14px] leading-[22px] pl-[3px]"}>KAUCJA</div>
                  <div className={btn + " w-7 h-6"}><svg viewBox="0 0 16 16" className="w-[15px] h-[15px]"><path d="M5 1h6v4h4v6h-4v4H5v-4H1V5h4z" fill="#333" /></svg></div>
                </div>
              </div>
              <div className="pt-[5px]">
                <Label text="Nazwa" u />
                <div className={sans + " mt-[2px] w-[471px] h-[26px] border border-[#f0f0dc] border-b-[#aaa] font-bold text-[14px] leading-[23px] pl-[3px] tracking-[0.120px]"}>Kaucja za butelkę PET 0.5</div>
              </div>
            </div>
            <div className="h-[50px] shrink-0 bg-[#f0f0f0] flex pl-[9px]">
              <div className="w-[249px] pt-[5px]">
                <Label text="Typ asortymentu" u />
                <div className={sans + " mt-[3px] w-[232px] h-[26px] bg-white border border-[#ddd] rounded-[2px] font-bold text-[13.500px] pl-1 pr-[4px] flex items-center justify-between tracking-[-0.100px]"}>
                  Asortyment - wyrób/mat.
                  <svg viewBox="0 0 12 8" className="w-3 h-2" fill="none" stroke="#666"><path d="m.5 1 5.500 6L11.500 1" /></svg>
                </div>
              </div>
              <div className="pt-[5px] w-[419px]">
                <Label text="Nazwa pomocnicza, np. opis w innym języku" />
                <div className={input + " mt-[3px] w-[411px] h-[26px]"} />
              </div>
              <div className="pt-[7px]">
                <Label text="ID" u />
                <div className={tahoma + " mt-[3px] ml-[1px] w-[50px] h-[23px] bg-[#bfbfbf] border border-white text-[#808080] text-[14px] text-right pr-[3px] leading-[21px]"}>1996</div>
              </div>
            </div>
            <div className="h-[50px] shrink-0 bg-[#f0f0f0] flex pl-[9px]">
              <div className="w-[249px] pt-[5px]">
                <Label text="Grupa asortymentu" u />
                <div className="flex mt-[3px]">
                  <div className="w-[199px] h-[25px] bg-white border-2 border-[#777] border-b-[#bbb] border-r-[#bbb] flex justify-end">
                    <div className={btn + " w-[21px] h-[21px]"}><svg viewBox="0 0 10 5" className="w-[9px] h-[5px]"><path d="M0 0h10L5 5z" /></svg></div>
                  </div>
                  <div className={btn + " w-[27px] h-6 ml-1"}><RedCross /></div>
                </div>
              </div>
              <div className="pt-[3px]">
                <Label text="Asortyment na fakturze będzie drukowany jako" className="mb-[4px]" />
                <Lookup />
              </div>
            </div>
            <div className="h-[62px] shrink-0 bg-[#f0f0f0] flex pl-[9px]">
              <div className="w-[249px] pt-[6px]">
                <Label text="Kod kreskowy" u />
                <div className="flex mt-[1px]">
                  <div className={input + " w-[198px] h-[26px]"} />
                  <div className={btn + " w-[28px] h-6 ml-1"}><svg viewBox="0 0 20 20" className="w-5 h-5" fill="none" stroke="#222"><path d="M2 8v11M5 10v9M8 12v7M14 9v10M18 4v15" strokeWidth="1.600" /><path d="M11 11v7" strokeWidth="3" /><circle cx="7" cy="6" r="4.500" fill="#ddd" stroke="#555" /><path d="m10 9 6 7" stroke="#555" strokeWidth="2" /></svg></div>
                </div>
              </div>
              <div className="pt-[6px]">
                <Label text="Asortyment zaliczkowy będzie rozliczany asortymentem" className="mb-[1px]" />
                <Lookup />
              </div>
            </div>
            <div className={sans + " flex-1 bg-[#ffffe1] flex items-center pl-[9px] gap-1 font-bold text-[13.500px] tracking-[-0.120px]"}>
              <Check state="on" />Asortyment aktywny
            </div>
          </div>
          <div className={tahoma + " flex h-[27px] items-end text-[#222] bg-[#f1f1f1] pl-[2px] w-[741px]"}>
            {subTabs.map(([t, w], i) => (
              <div key={t} className={w + (i === 2 ? " h-[27px] leading-[24px] bg-[#f9f9f9]" : " h-[24px] leading-[22px] bg-[#f3f3f3] border-r border-[#e8e8e8]")}>{t}</div>
            ))}
          </div>
          <div className="w-[741px] border-x border-b border-[#eaeaea] px-1 pb-1 pt-[3px]">
            <div className={tahoma + " h-[265px] bg-[#f0f0f0] pl-[5px] pt-[8px] grid grid-cols-[266px_245px_1fr] grid-rows-[24px_24px_25px_24px_25px_24px_25px_24px_26px_30px]"}>
              {options.flatMap((row, r) =>
                [0, 1, 2].map((c) => {
                  const o = row[c];
                  if (!o) return <div key={r + "-" + c} />;
                  const dim = o[1] === "dis" || o[1] === "dison";
                  return (
                    <div key={r + "-" + c} className="flex items-center gap-[4px] min-w-0">
                      <Check state={o[1]} />
                      <span className={r === 0 && c === 0 ? "font-['Liberation_Sans',sans-serif] font-bold text-[13.500px] tracking-[0px]" : dim ? "text-[#8a8a8a]" : "text-[#1c1c1c]"}>{o[0]}</span>
                    </div>
                  );
                })
              )}
            </div>
          </div>
        </div>
      </div>
      <div className="h-[51px] shrink-0 mx-px mt-[2px] border-t-2 border-l-2 border-[#7d7d7d] border-b border-b-[#ccc] flex items-center justify-end gap-[6px] pr-[11px] pt-[3px]">
        <div className={tahoma + " w-[94px] h-8 bg-[#f0f6ee] border border-[#c3d8c0] text-[#a3aaa0] flex items-center justify-center text-[14px]"}><span className="underline underline-offset-2">Z</span>atwierdź</div>
        <div className={tahoma + " w-[94px] h-8 bg-[#fdfdfd] border-[1.500px] border-[#33628f] rounded-[4px] flex items-center pl-[11px] gap-[5px]"}>
          <svg viewBox="0 0 20 20" className="w-5 h-5"><path d="m3 2 14 16M17 4 3 17" stroke="#e01010" strokeWidth="4.500" strokeLinecap="round" /></svg>
          Anuluj
        </div>
      </div>
      <div className="flex-1 mt-[2px] mx-px border-t-2 border-l-2 border-[#7d7d7d]" />
    </div>
  );
}

export default function App() {
  return (
    <div className="relative w-[1605px] h-[1241px] overflow-hidden bg-white text-black">
      <div className="absolute left-[1062px] top-0 w-[543px] h-[437px] border-l-[7px] border-b-[9px] border-black bg-white" />
      <MainWindow />
      <ListWindow />
      <Dialog />
      {/* pointer to the deposit checkbox */}
      <svg viewBox="0 0 124 98" className="absolute left-[1247px] top-[862px] w-[124px] h-[98px]">
        <path d="M3.500 26.500h59v-22L121 49.500 62.500 94V72h-59z" fill="none" stroke="#000" strokeWidth="4.500" />
      </svg>
    </div>
  );
}
